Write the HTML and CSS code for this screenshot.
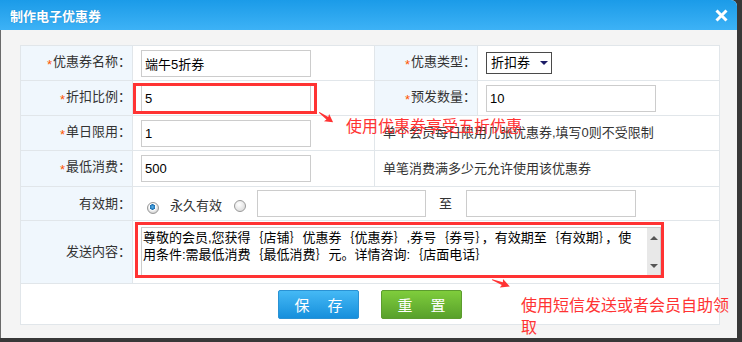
FILE: index.html
```html
<!DOCTYPE html>
<html lang="zh-CN">
<head>
  <meta charset="UTF-8" />
  <meta name="viewport" content="width=device-width, initial-scale=1.0"/>
  <title>制作电子优惠券</title>
  <link rel="stylesheet" href="styles.css">
</head>
<body>

  <div class="dialog">
    <div class="titlebar">
      <span class="title">制作电子优惠券</span>
      <span class="close">
        <svg width="13" height="13" viewBox="0 0 13 13">
          <path d="M1.5 1.5 L11.5 11.5 M11.5 1.5 L1.5 11.5" stroke="#fff" stroke-width="3" fill="none"/>
        </svg>
      </span>
    </div>

    <div class="content">
      <table class="form">
        <colgroup>
          <col class="c-label">
          <col class="c-field">
          <col class="c-label2">
          <col class="c-field">
        </colgroup>
        <tr class="r1">
          <th><i>*</i>优惠券名称：</th>
          <td><input class="txt" type="text" value="端午5折券"></td>
          <th><i>*</i>优惠类型：</th>
          <td>
            <div class="select">折扣券<span class="caret"></span></div>
          </td>
        </tr>
        <tr class="r2">
          <th><i>*</i>折扣比例：</th>
          <td><input class="txt" type="text" value="5"></td>
          <th><i>*</i>预发数量：</th>
          <td><input class="txt" type="text" value="10"></td>
        </tr>
        <tr class="r3">
          <th><i>*</i>单日限用：</th>
          <td><input class="txt" type="text" value="1"></td>
          <td colspan="2" class="desc">单个会员每日限用几张优惠券,填写0则不受限制</td>
        </tr>
        <tr class="r4">
          <th><i>*</i>最低消费：</th>
          <td><input class="txt" type="text" value="500"></td>
          <td colspan="2" class="desc">单笔消费满多少元允许使用该优惠券</td>
        </tr>
        <tr class="r5">
          <th>有效期：</th>
          <td colspan="3">
            <div class="period">
              <span class="radio checked"></span>
              <span class="radio-text">永久有效</span>
              <span class="radio"></span>
              <input class="txt" type="text" value="">
              <span class="to">至</span>
              <input class="txt" type="text" value="">
            </div>
          </td>
        </tr>
        <tr class="r6">
          <th>发送内容：</th>
          <td colspan="3">
            <div class="msg">
              <textarea class="msg-text">尊敬的会员,您获得｛店铺｝优惠券｛优惠券｝,券号｛券号｝，有效期至｛有效期｝，使
用条件:需最低消费｛最低消费｝元。详情咨询:｛店面电话｝</textarea>
              <div class="scroll">
                <span class="up"></span>
                <span class="down"></span>
              </div>
            </div>
          </td>
        </tr>
        <tr class="r7">
          <td colspan="4">
            <div class="actions">
              <button class="btn btn-save"><span>保</span><span>存</span></button>
              <button class="btn btn-reset"><span>重</span><span>置</span></button>
            </div>
          </td>
        </tr>
      </table>
    </div>

    <!-- annotations -->
    <div class="mark mark-rate"></div>
    <svg class="arrow arrow-1" width="20" height="16" viewBox="0 0 20 16">
      <g transform="rotate(35 2 2)">
        <polygon points="1,1.5 11,0.5 10,-2.5 18,2 10,6.5 11,3.5 1,2.5" fill="#f33"/>
      </g>
    </svg>
    <p class="note note-1">使用优惠券享受五折优惠</p>

    <div class="mark mark-msg"></div>
    <svg class="arrow arrow-2" width="22" height="12" viewBox="0 0 22 12">
      <g transform="rotate(21 2 2)">
        <polygon points="1,1.5 12,0.5 11,-2.5 20,2 11,6.5 12,3.5 1,2.5" fill="#f33"/>
      </g>
    </svg>
    <p class="note note-2">使用短信发送或者会员自助领取</p>
  </div>

</body>
</html>
```

FILE: styles.css
```css
* {
  box-sizing: border-box;
}

body {
  margin: 0;
  background: #383838;
  font-family: "Liberation Sans", "Noto Sans CJK SC", sans-serif;
  font-size: 13px;
  color: #333;
}

.dialog {
  position: relative;
  width: 737px;
  height: 338px;
  background: #f4f4f4;
  border-top-right-radius: 6px;
  overflow: hidden;
}

.titlebar {
  height: 30px;
  display: flex;
  align-items: center;
  justify-content: space-between;
  padding: 0 9px 0 10px;
  background: linear-gradient(#1b9be8, #3db2f6);
}

.title {
  color: #fff;
  font-weight: bold;
  font-size: 13px;
  text-shadow: 0 0 1px rgba(0, 60, 120, 0.4);
}

.close {
  display: flex;
}

.content {
  height: 308px;
  padding: 15px 0 0 19px;
  border-left: 1px solid #6a6a6a;
}

.form {
  width: 699px;
  border-collapse: collapse;
  table-layout: fixed;
  background: #fff;
}

.c-label { width: 112px; }
.c-field { width: 242px; }
.c-label2 { width: 103px; }

.form th,
.form td {
  border: 1px solid #e1e6ea;
  padding: 0 8px;
  line-height: 18px;
}

.form th {
  background: #f0f7fd;
  font-weight: normal;
  text-align: right;
  padding-right: 1px;
  color: #333;
  white-space: nowrap;
}

.form th i {
  font-style: normal;
  color: #f50;
  vertical-align: -3px;
  margin-right: 1px;
}

.r1, .r2, .r3 { height: 35px; }
.r4 { height: 36px; }
.r5 { height: 34px; }
.r6 { height: 63px; }
.r7 { height: 41px; }

.txt {
  display: block;
  width: 170px;
  height: 27px;
  border: 1px solid #ccc;
  padding: 0 3px;
  margin: 0;
  font: inherit;
  font-size: 13px;
  color: #000;
  background: #fff;
  outline: none;
}

.select {
  display: flex;
  align-items: center;
  width: 66px;
  height: 22px;
  border: 1px solid #4a4a4a;
  padding-left: 4px;
  color: #000;
}

.caret {
  margin-left: 10px;
  border-top: 4px solid #1c1c66;
  border-left: 4px solid transparent;
  border-right: 4px solid transparent;
}

.desc {
  color: #333;
}

.period {
  display: flex;
  align-items: center;
}

.radio {
  width: 12px;
  height: 12px;
  border-radius: 50%;
  border: 1px solid #9a9a9a;
  background: radial-gradient(circle at 40% 35%, #fff, #d4d4d4);
  margin-top: 4px;
}

.radio.checked {
  margin-left: 6px;
  margin-top: 8px;
  background: radial-gradient(circle at 45% 40%, #5fb6ec 0, #1a6fb2 2.5px, #fff 3px, #d0d0d0 6px);
}

.radio-text {
  margin: 4px 12px 0 11px;
}

.period .radio + .txt {
  margin-left: 11px;
  width: 169px;
}

.to {
  margin: 0 14px 0 13px;
}

.msg {
  display: flex;
  width: 520px;
  height: 50px;
  border: 1px solid #ccc;
  background: #fff;
}

.msg-text {
  flex: 1;
  border: none;
  resize: none;
  overflow: hidden;
  margin: 0;
  padding: 1px 0 0 1px;
  font: inherit;
  font-size: 13px;
  line-height: 17px;
  color: #000;
  outline: none;
}

.scroll {
  width: 13px;
  background: #e8e8e8;
  display: flex;
  flex-direction: column;
  justify-content: space-between;
  align-items: center;
  padding: 8px 0 8px;
}

.scroll .up {
  border-bottom: 4px solid #555;
  border-left: 4px solid transparent;
  border-right: 4px solid transparent;
}

.scroll .down {
  border-top: 4px solid #555;
  border-left: 4px solid transparent;
  border-right: 4px solid transparent;
}

.actions {
  display: flex;
  justify-content: center;
  gap: 22px;
}

.btn {
  display: flex;
  justify-content: center;
  align-items: center;
  gap: 18px;
  width: 81px;
  height: 29px;
  padding: 0;
  border-radius: 2px;
  color: #fff;
  font-family: "Noto Sans CJK SC", sans-serif;
  font-size: 15px;
  cursor: pointer;
}

.btn-save {
  border: 1px solid #2a92d4;
  background: linear-gradient(#45b9f5, #168fdc);
}

.btn-reset {
  border: 1px solid #5c9c2e;
  background: linear-gradient(#7fcd3c, #58a02b);
}

/* red annotations drawn over the form */
.mark {
  position: absolute;
  border: 3px solid #f33;
}

.mark-rate {
  left: 133px;
  top: 83px;
  width: 184px;
  height: 31px;
}

.mark-msg {
  left: 135px;
  top: 222px;
  width: 529px;
  height: 56px;
}

.arrow {
  position: absolute;
}

.arrow-1 {
  left: 318px;
  top: 111px;
}

.arrow-2 {
  left: 491px;
  top: 278px;
}

.note {
  position: absolute;
  margin: 0;
  color: #f33;
  font-family: "Noto Sans CJK SC", sans-serif;
  font-size: 16px;
  line-height: 22px;
}

.note-1 {
  left: 346px;
  top: 114px;
}

.note-2 {
  left: 521px;
  top: 293px;
  width: 212px;
}
```
